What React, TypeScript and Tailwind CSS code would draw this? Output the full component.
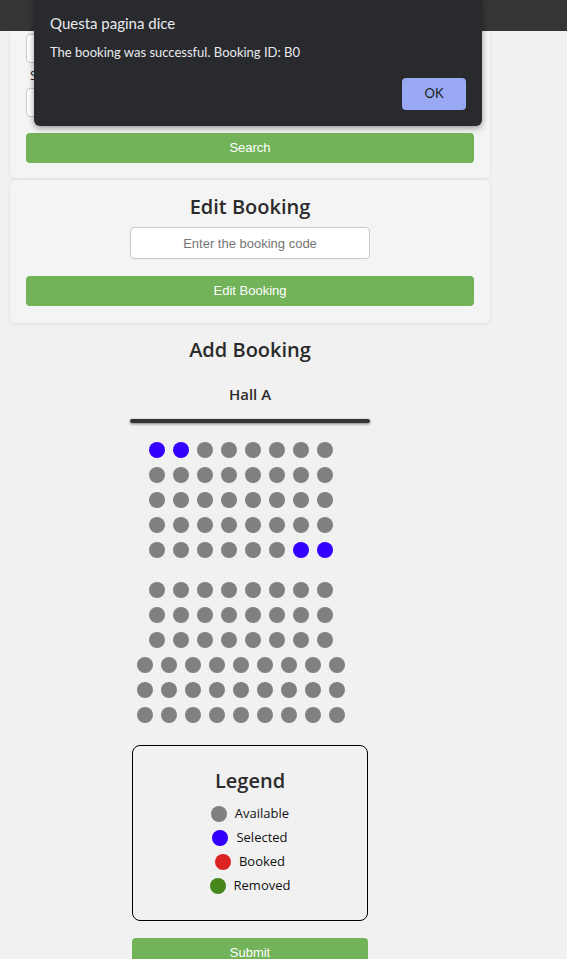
import React from 'react';

const ui = { fontFamily: '"Open Sans", "Noto Sans", sans-serif' };
const arial = { fontFamily: '"Liberation Sans", Arial, sans-serif' };
const dialogFont = { fontFamily: 'Lato, "Open Sans", sans-serif' };

// seat rows: 's' marks a selected seat, 'a' an available one
const rows: string[][] = [
  ['s', 's', 'a', 'a', 'a', 'a', 'a', 'a'],
  ['a', 'a', 'a', 'a', 'a', 'a', 'a', 'a'],
  ['a', 'a', 'a', 'a', 'a', 'a', 'a', 'a'],
  ['a', 'a', 'a', 'a', 'a', 'a', 'a', 'a'],
  ['a', 'a', 'a', 'a', 'a', 'a', 's', 's'],
];
const rowsB: string[][] = [
  ['a', 'a', 'a', 'a', 'a', 'a', 'a', 'a'],
  ['a', 'a', 'a', 'a', 'a', 'a', 'a', 'a'],
  ['a', 'a', 'a', 'a', 'a', 'a', 'a', 'a'],
  ['a', 'a', 'a', 'a', 'a', 'a', 'a', 'a', 'a'],
  ['a', 'a', 'a', 'a', 'a', 'a', 'a', 'a', 'a'],
  ['a', 'a', 'a', 'a', 'a', 'a', 'a', 'a', 'a'],
];

function SeatRow({ seats }: { seats: string[] }) {
  return (
    <div className="flex gap-2">
      {seats.map((s, i) => (
        <span
          key={i}
          className={s === 's' ? 'block w-4 h-4 rounded-full bg-[#3300ff]' : 'block w-4 h-4 rounded-full bg-[#808080]'}
        />
      ))}
    </div>
  );
}

const legend = [
  { label: 'Available', color: 'bg-[#808080]' },
  { label: 'Selected', color: 'bg-[#3300ff]' },
  { label: 'Booked', color: 'bg-[#dd2222]' },
  { label: 'Removed', color: 'bg-[#46861c]' },
];

export default function App() {
  return (
    <div className="relative min-h-[959px] bg-[#f1f1f1] overflow-hidden" style={ui}>
      {/* top bar */}
      <div className="h-[31px] bg-[#353535]" />

      <div className="w-[500px]">
        {/* Search card */}
        <div className="mx-[10px] bg-[#f4f4f4] rounded-b-md shadow-[0_1px_4px_rgba(0,0,0,0.08)] px-4 pt-[3px] pb-[15px]">
          <input
            className="block w-full h-[29px] rounded border border-[#c8c8c8] bg-white px-2 text-[13px]"
            style={arial}
          />
          <div className="mt-[2px] h-[21px] text-[13px] leading-[21px] text-[#222] pl-1">Select the hall</div>
          <input
            className="block mt-[2px] w-full h-[29px] rounded border border-[#c8c8c8] bg-white px-2 text-[13px]"
            style={arial}
          />
          <button
            className="block mt-[16px] w-full h-[30px] rounded bg-[#72b259] text-white text-[13px]"
            style={arial}
          >
            Search
          </button>
        </div>

        {/* Edit booking card */}
        <div className="mx-[10px] mt-[2px] bg-[#f4f4f4] rounded-md shadow-[0_1px_4px_rgba(0,0,0,0.08)] px-4 pt-[13px] pb-[17px] flex flex-col items-center">
          <h2 className="text-[20px] leading-[28px] font-semibold text-[#2b2b2b]">Edit Booking</h2>
          <input
            placeholder="Enter the booking code"
            className="block mt-[6px] w-[240px] h-[32px] rounded border border-[#c8c8c8] bg-white px-2 text-[13px] text-center placeholder:text-[#757575]"
            style={arial}
          />
          <button
            className="block mt-[17px] w-full h-[30px] rounded bg-[#72b259] text-white text-[13px]"
            style={arial}
          >
            Edit Booking
          </button>
        </div>

        {/* Add booking */}
        <div className="flex flex-col items-center">
          <h2 className="mt-[13px] text-[20px] leading-[28px] font-semibold text-[#2b2b2b]">Add Booking</h2>
          <div className="mt-[20px] text-[15px] leading-[20px] font-semibold text-[#2b2b2b]">Hall A</div>
          <div className="mt-[15px] w-[240px] h-[4px] rounded-full bg-[#333] shadow-[0_1px_3px_rgba(0,0,0,0.5)]" />

          <div className="mt-[19px] pr-[18px] flex flex-col items-center gap-[9px]">
            {rows.map((r, i) => (
              <SeatRow key={i} seats={r} />
            ))}
            <div className="mt-[15px] flex flex-col items-center gap-[9px]">
              {rowsB.map((r, i) => (
                <SeatRow key={i} seats={r} />
              ))}
            </div>
          </div>

          {/* Legend */}
          <div className="mt-[22px] w-[236px] h-[176px] border border-black rounded-lg flex flex-col items-center pt-[21px]">
            <h3 className="text-[20px] leading-[28px] font-semibold text-[#2b2b2b]">Legend</h3>
            <div className="mt-[11px] flex flex-col items-center gap-[8px]">
              {legend.map((l) => (
                <div key={l.label} className="flex items-center gap-2 h-[16px]">
                  <span className={'block w-4 h-4 rounded-full ' + l.color} />
                  <span className="text-[13px] text-[#111]">{l.label}</span>
                </div>
              ))}
            </div>
          </div>

          <button
            className="block mt-[17px] w-[236px] h-[30px] rounded bg-[#72b259] text-white text-[13px]"
            style={arial}
          >
            Submit
          </button>
        </div>
      </div>

      {/* browser alert dialog */}
      <div
        className="absolute left-[34px] top-0 w-[448px] h-[126px] bg-[#292a2d] rounded-b-md shadow-[0_2px_6px_rgba(0,0,0,0.4)] px-4 pt-[12px]"
        style={dialogFont}
      >
        <div className="text-[15px] leading-[22px] text-[#e8eaed]">Questa pagina dice</div>
        <div className="mt-[9px] text-[13px] leading-[18px] text-[#e8eaed]">The booking was successful. Booking ID: B0</div>
        <div className="mt-[17px] flex justify-end">
          <button className="w-[64px] h-[32px] rounded bg-[#99a9f3] text-[13px] text-[#202124]">OK</button>
        </div>
      </div>
    </div>
  );
}
